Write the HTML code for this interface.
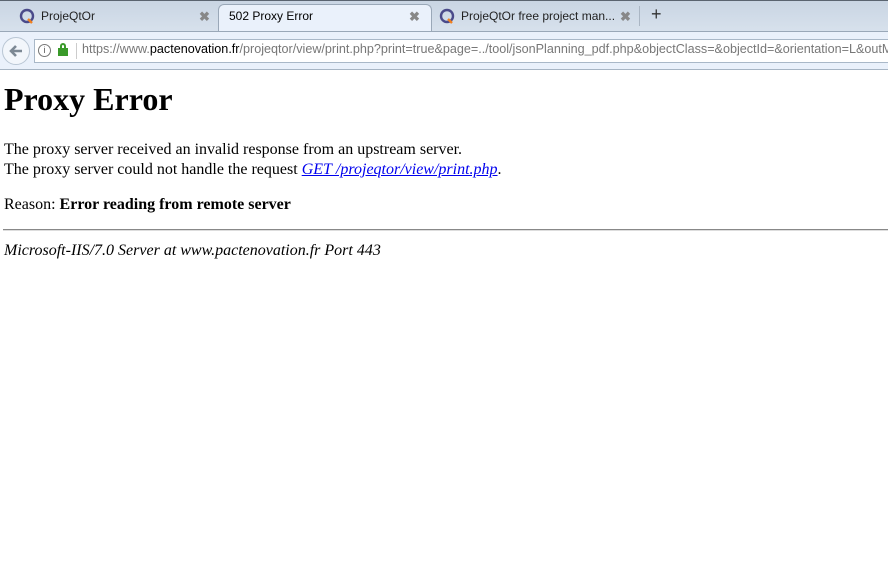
<!DOCTYPE html>
<html><head><meta charset="utf-8"><style>
*{margin:0;padding:0;box-sizing:border-box}
body{width:888px;height:566px;overflow:hidden;background:#fff;position:relative;font-family:"Liberation Serif",serif;}
.ui{font-family:"Liberation Sans",sans-serif;font-size:12px;color:#222;}
.abs{position:absolute;white-space:nowrap}
#tabbar{position:absolute;left:0;top:0;width:888px;height:31px;background:linear-gradient(#c9d5e3,#d7e1ec);border-top:1px solid #5a6470;overflow:hidden}
.tab{position:absolute;top:3px;height:28px;}
#active{left:218px;width:214px;background:#eaf1fb;border:1px solid #9aa8b8;border-bottom:none;border-radius:6px 6px 0 0}
#toolbar{position:absolute;left:0;top:31px;width:888px;height:39px;background:#eaf1fb;border-top:1px solid #9aa8b8;border-bottom:1px solid #a7b5c4;overflow:hidden}
#url{position:absolute;left:34px;top:7px;width:860px;height:24px;background:#fff;border:1px solid #a9b8c8}
.x{color:#888;font-weight:bold;font-size:13px}
</style></head><body>
<div id="tabbar" class="ui">
  <svg class="abs" style="left:19px;top:7px" width="16" height="16" viewBox="0 0 16 16"><circle cx="8" cy="8" r="6" fill="none" stroke="#4a4a8a" stroke-width="2.4"/><path d="M9 11 L13 15" stroke="#f08020" stroke-width="2.4"/></svg>
  <div class="abs" style="left:41px;top:8px">ProjeQtOr</div>
  <div class="abs x" style="left:199px;top:8px">✖</div>
  <div class="tab" id="active"></div>
  <div class="abs" style="left:229px;top:8px;color:#000">502 Proxy Error</div>
  <div class="abs x" style="left:409px;top:8px">✖</div>
  <svg class="abs" style="left:439px;top:7px" width="16" height="16" viewBox="0 0 16 16"><circle cx="8" cy="8" r="6" fill="none" stroke="#4a4a8a" stroke-width="2.4"/><path d="M9 11 L13 15" stroke="#f08020" stroke-width="2.4"/></svg>
  <div class="abs" style="left:461px;top:8px">ProjeQtOr free project man...</div>
  <div class="abs x" style="left:620px;top:8px">✖</div>
  <div class="abs" style="left:639px;top:5px;width:1px;height:20px;background:#aab6c4"></div>
  <div class="abs" style="left:651px;top:3px;font-size:18px;color:#333">+</div>
</div>
<div id="toolbar" class="ui">
  <div class="abs" style="left:2px;top:5px;width:28px;height:28px;border:1px solid #b9c6d4;border-radius:50%;background:#f2f6fb"></div>
  <svg class="abs" style="left:8px;top:11px" width="16" height="16" viewBox="0 0 16 16"><path d="M14 8 H4 M8 3 L3 8 L8 13" fill="none" stroke="#7c8894" stroke-width="2.6"/></svg>
  <div id="url"></div>
  <div class="abs" style="left:38px;top:12px;width:13px;height:13px;border:1px solid #777;border-radius:50%;font-size:9px;text-align:center;line-height:11px;color:#555">i</div>
  <div class="abs" style="left:58px;top:16px;width:10px;height:8px;background:#3a9a2a"></div>
  <div class="abs" style="left:60px;top:11px;width:6px;height:7px;border:2px solid #3a9a2a;border-bottom:none;border-radius:3px 3px 0 0"></div>
  <div class="abs" style="left:76px;top:11px;width:1px;height:16px;background:#ccc"></div>
  <div class="abs" style="left:82px;top:10px;width:806px;overflow:hidden;font-size:12.6px;color:#777">https://www.<span style="color:#000">pactenovation.fr</span>/projeqtor/view/print.php?print=true&amp;page=../tool/jsonPlanning_pdf.php&amp;objectClass=&amp;objectId=&amp;orientation=L&amp;outMode=pdf</div>
</div>
<div class="abs" style="left:4px;top:81px;font-size:32px;line-height:37px;font-weight:bold">Proxy Error</div>
<div class="abs" style="left:4px;top:140px;font-size:16px;line-height:20px">The proxy server received an invalid response from an upstream server.</div>
<div class="abs" style="left:4px;top:160px;font-size:16px;line-height:20px">The proxy server could not handle the request <a style="color:#00e;font-style:italic;text-decoration:underline">GET&nbsp;/projeqtor/view/print.php</a>.</div>
<div class="abs" style="left:4px;top:195px;font-size:16px;line-height:20px">Reason: <b>Error reading from remote server</b></div>
<div class="abs" style="left:3px;top:229px;width:885px;height:2px;border-top:1px solid #888;border-bottom:1px solid #ddd"></div>
<div class="abs" style="left:4px;top:241px;font-size:16px;line-height:20px;font-style:italic">Microsoft-IIS/7.0 Server at www.pactenovation.fr Port 443</div>
</body></html>
